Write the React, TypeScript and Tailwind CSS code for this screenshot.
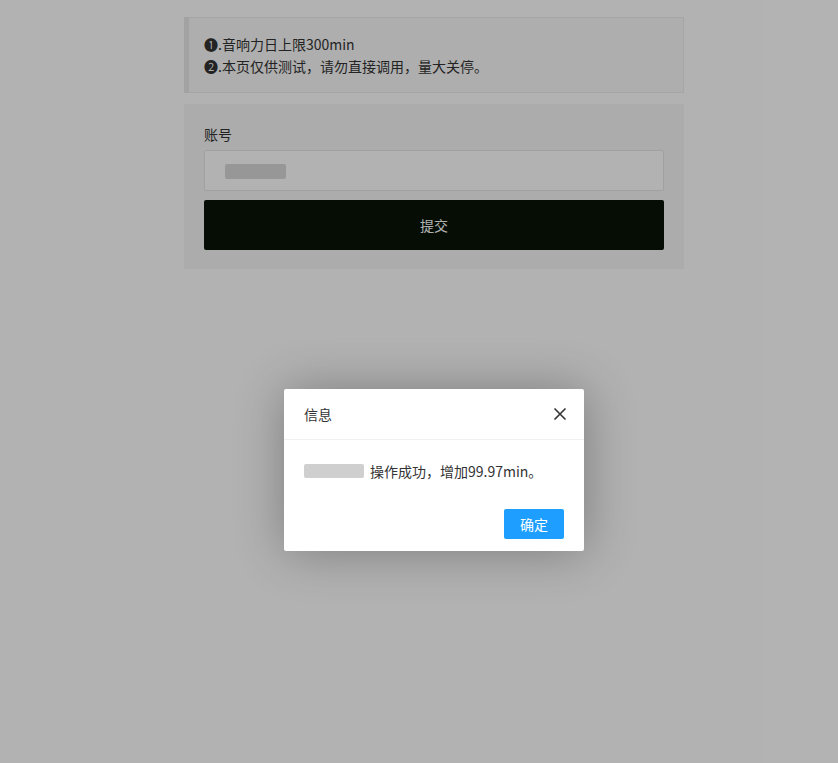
import React from "react";

const font = { fontFamily: '"Noto Sans CJK SC", "DejaVu Sans", sans-serif' };

export default function App() {
  return (
    <div className="relative min-h-[763px] w-full bg-white text-[14px] text-[#333]" style={font}>
      <div className="ml-[184px] w-[500px] pt-[17px]">
        <div className="border border-[#ececec] border-l-[5px] border-l-[#e8e8e8] bg-[#fafafa] px-[15px] py-[15px] leading-[22px] text-[#333]">
          <div>❶.音响力日上限300min</div>
          <div>❷.本页仅供测试，请勿直接调用，量大关停。</div>
        </div>
        <div className="mt-[11px] bg-[#f7f7f7] px-[20px] pb-[19px] pt-[20px]">
          <div className="mb-[6px] leading-[20px]">账号</div>
          <div className="flex h-[41px] items-center rounded-[2px] border border-[#e6e6e6] bg-white pl-[20px]">
            <div className="mt-[1px] h-[15px] w-[61px] rounded-[2px] bg-[#d9d9d9] blur-[0.6px]" />
          </div>
          <button className="mt-[9px] flex h-[50px] w-full items-center justify-center rounded-[2px] bg-[#081408] text-white">
            提交
          </button>
        </div>
      </div>

      <div className="absolute inset-0 bg-black/30" />

      <div className="absolute left-[284px] top-[389px] w-[300px] rounded-[2px] bg-white shadow-[1px_1px_50px_rgba(0,0,0,0.3)]">
        <div className="flex h-[51px] items-center justify-between border-b border-[#f0f0f0] pl-[20px] pr-[17px]">
          <span className="text-[14px] text-[#333]">信息</span>
          <svg width="14" height="14" viewBox="0 0 14 14" className="text-[#333]">
            <path d="M1.5 1.5 L12.5 12.5 M12.5 1.5 L1.5 12.5" stroke="currentColor" strokeWidth="1.6" fill="none" />
          </svg>
        </div>
        <div className="flex items-center px-[20px] py-[20px] leading-[22px] text-[#333]">
          <span className="mr-[6px] inline-block h-[14px] w-[60px] rounded-[2px] bg-[#cfcfcf]" />
          <span>操作成功，增加99.97min。</span>
        </div>
        <div className="flex justify-end px-[20px] pb-[12px] pt-[7px]">
          <button className="flex h-[30px] w-[60px] items-center justify-center rounded-[2px] bg-[#1e9fff] text-[14px] text-white">
            确定
          </button>
        </div>
      </div>
    </div>
  );
}
